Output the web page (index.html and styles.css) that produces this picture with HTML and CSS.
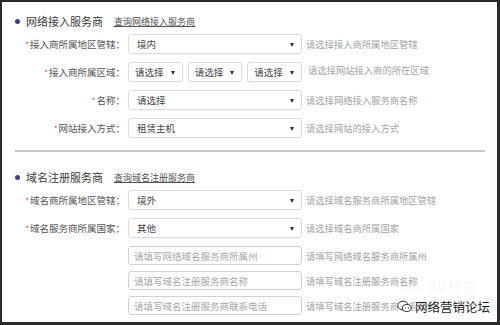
FILE: index.html
```html
<!DOCTYPE html>
<html lang="zh-CN">
<head>
  <meta charset="UTF-8" />
  <title>服务商信息</title>
  <link rel="stylesheet" href="styles.css">
</head>
<body>
  <div class="frame">
    <!-- 网络接入服务商 -->
    <div class="section-head">
      <span class="dot"></span>
      <span class="section-title">网络接入服务商</span>
      <a class="query-link" href="#">查询网络接入服务商</a>
    </div>

    <div class="row">
      <label class="label"><i>*</i>接入商所属地区管辖<em>：</em></label>
      <div class="select wide"><span>境内</span><b class="arrow"></b></div>
      <span class="hint">请选择接入商所属地区管辖</span>
    </div>

    <div class="row">
      <label class="label"><i>*</i>接入商所属区域<em>：</em></label>
      <div class="select-group">
        <div class="select"><span>请选择</span><b class="arrow"></b></div>
        <div class="select"><span>请选择</span><b class="arrow"></b></div>
        <div class="select"><span>请选择</span><b class="arrow"></b></div>
      </div>
      <span class="hint hint-up">请选择网站接入商的所在区域</span>
    </div>

    <div class="row">
      <label class="label"><i>*</i>名称<em>：</em></label>
      <div class="select wide"><span>请选择</span><b class="arrow"></b></div>
      <span class="hint">请选择网络接入服务商名称</span>
    </div>

    <div class="row">
      <label class="label"><i>*</i>网站接入方式<em>：</em></label>
      <div class="select wide"><span>租赁主机</span><b class="arrow"></b></div>
      <span class="hint">请选择网站的接入方式</span>
    </div>

    <hr class="divider" />

    <!-- 域名注册服务商 -->
    <div class="section-head">
      <span class="dot"></span>
      <span class="section-title">域名注册服务商</span>
      <a class="query-link" href="#">查询域名注册服务商</a>
    </div>

    <div class="row">
      <label class="label"><i>*</i>域名商所属地区管辖<em>：</em></label>
      <div class="select wide"><span>境外</span><b class="arrow"></b></div>
      <span class="hint">请选择域名服务商所属地区管辖</span>
    </div>

    <div class="row">
      <label class="label"><i>*</i>域名服务商所属国家<em>：</em></label>
      <div class="select wide"><span>其他</span><b class="arrow"></b></div>
      <span class="hint">请选择域名商所属国家</span>
    </div>

    <div class="row text-row">
      <label class="label"></label>
      <input class="text-input" type="text" placeholder="请填写网络域名服务商所属州" />
      <span class="hint">请填写网络域名服务商所属州</span>
    </div>

    <div class="row text-row">
      <label class="label"></label>
      <input class="text-input" type="text" placeholder="请填写域名注册服务商名称" />
      <span class="hint">请填写域名注册服务商名称</span>
    </div>

    <div class="row text-row">
      <label class="label"></label>
      <input class="text-input" type="text" placeholder="请填写域名注册服务商联系电话" />
      <span class="hint">请填写域名注册服务商联系电话</span>
    </div>

    <!-- watermarks -->
    <div class="baidu-mark">Bai<span class="paw">du</span>经验</div>
    <div class="wx-mark">
      <svg class="wx-icon" width="15" height="13" viewBox="0 0 15 13">
        <ellipse cx="6" cy="5.5" rx="5.2" ry="4.3" fill="#fff" stroke="#333" stroke-width="1"/>
        <ellipse cx="9.8" cy="8" rx="4.3" ry="3.5" fill="#fff" stroke="#333" stroke-width="1"/>
        <circle cx="8.3" cy="7.8" r="0.6" fill="#333"/>
        <circle cx="11.3" cy="7.8" r="0.6" fill="#333"/>
      </svg>
      <span>网络营销论坛</span>
    </div>
  </div>
</body>
</html>
```

FILE: styles.css
```css
body {
  margin: 0;
  background-color: #fff;
  font-family: "Noto Sans CJK SC", "Noto Sans", sans-serif;
}

.frame {
  position: relative;
  box-sizing: border-box;
  width: 500px;
  height: 325px;
  border-style: solid;
  border-color: #2b2b2b;
  border-width: 2px 3px 3px 2px;
  padding-top: 12px;
  overflow: hidden;
}

.section-head {
  display: flex;
  align-items: center;
  height: 14px;
  padding-left: 13px;
  margin-bottom: 6px;
}

.dot {
  width: 5px;
  height: 5px;
  border-radius: 50%;
  background-color: #3b3f8e;
  margin-right: 6px;
}

.section-title {
  font-size: 11px;
  color: #3a3a3a;
  margin-right: 11px;
}

.query-link {
  font-size: 9px;
  color: #555;
  text-decoration: underline;
}

.row {
  display: flex;
  align-items: center;
  height: 20px;
  margin-bottom: 8px;
}

.text-row {
  height: 19px;
  margin-bottom: 6px;
}

.label {
  width: 123px;
  margin-right: 3px;
  text-align: right;
  font-size: 9.5px;
  color: #555;
  white-space: nowrap;
}

.label i {
  font-style: normal;
  color: #e0483e;
  font-size: 8px;
  margin-right: 1px;
}

.label em {
  font-style: normal;
  font-family: "Noto Sans CJK JP", sans-serif;
}

.select {
  position: relative;
  box-sizing: border-box;
  display: flex;
  align-items: center;
  height: 20px;
  padding-left: 8px;
  border: 1px solid #dcdcdc;
  border-radius: 3px;
  box-shadow: 0 1px 1px rgba(0, 0, 0, 0.04);
  font-size: 9.5px;
  color: #444;
  background-color: #fff;
}

.select.wide {
  width: 174px;
}

.select-group {
  display: flex;
  gap: 5px;
  width: 174px;
}

.select-group .select {
  flex: 1;
  padding-left: 6px;
}

.arrow {
  position: absolute;
  right: 7px;
  top: 8px;
  width: 0;
  height: 0;
  border-left: 2.5px solid transparent;
  border-right: 2.5px solid transparent;
  border-top: 4px solid #333;
}

.text-input {
  box-sizing: border-box;
  width: 174px;
  height: 19px;
  margin: 0;
  padding: 0 0 0 5px;
  border: 1px solid #d2d2d2;
  border-radius: 3px;
  font-family: inherit;
  font-size: 9.5px;
  color: #333;
  outline: none;
}

.text-input::placeholder {
  color: #a8a8a8;
}

.hint {
  margin-left: 4px;
  font-size: 9.3px;
  color: #a3a3a3;
  white-space: nowrap;
}

.hint-up {
  margin-left: 6px;
  position: relative;
  top: -2px;
}

.divider {
  height: 2px;
  margin: 12px 12px 18px 13px;
  border: none;
  background-color: #c4c6c8;
}

.baidu-mark {
  position: absolute;
  left: 400px;
  top: 276px;
  font-size: 13px;
  line-height: 16px;
  font-weight: bold;
  color: rgba(0, 0, 0, 0.05);
  letter-spacing: 1px;
}

.baidu-mark .paw {
  margin: 0 2px;
}

.wx-mark {
  position: absolute;
  left: 395px;
  top: 295px;
  display: flex;
  align-items: center;
  gap: 3px;
}

.wx-mark span {
  font-size: 12.5px;
  color: #1e1e1e;
  text-shadow: 0 0 2px #fff, 0 0 2px #fff;
}
```
